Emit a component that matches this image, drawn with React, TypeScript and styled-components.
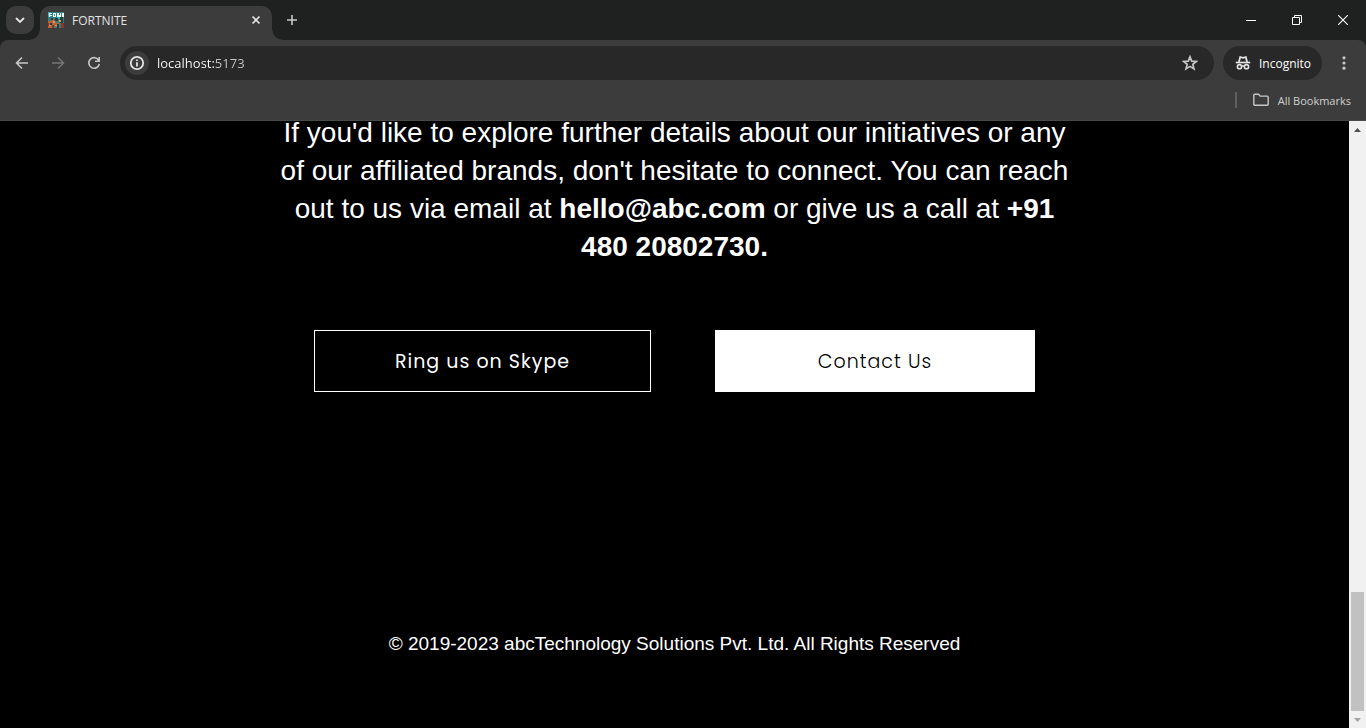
import React from "react";
import styled, { createGlobalStyle } from "styled-components";

const GlobalStyle = createGlobalStyle`
  * { box-sizing: border-box; }
  body { margin: 0; background: #000; overflow: hidden; }
  button, input { font: inherit; color: inherit; border: 0; padding: 0; margin: 0; background: none; }
  svg { display: block; }
`;

const Window = styled.div`
  display: flex;
  flex-direction: column;
  height: 100vh;
  background: #000;
  color: #e3e3e3;
  font-family: "Open Sans", "Noto Sans", sans-serif;
  font-size: 12px;
`;

const TabStrip = styled.div`
  display: flex;
  flex: none;
  height: 40px;
  padding: 6px 0 0 6px;
  background: #1f2120;
`;

const TabSearch = styled.button`
  display: grid;
  place-items: center;
  width: 28px;
  height: 28px;
  border-radius: 10px;
  background: #3c3c3c;
`;

const Tab = styled.div`
  position: relative;
  display: flex;
  align-items: center;
  width: 232px;
  height: 34px;
  margin-left: 6px;
  padding: 0 8px 6px;
  border-radius: 10px 10px 0 0;
  background: #3c3c3c;

  &::before, &::after {
    content: "";
    position: absolute;
    bottom: 0;
    width: 10px;
    height: 10px;
  }
  &::before {
    right: 100%;
    background: radial-gradient(circle at 0 0, transparent 9px, #3c3c3c 10px);
  }
  &::after {
    left: 100%;
    background: radial-gradient(circle at 100% 0, transparent 9px, #3c3c3c 10px);
  }
`;

const TabTitle = styled.span`
  flex: 1;
  margin-left: 8px;
`;

const IconButton = styled.button<{ $w?: number; $h?: number }>`
  display: grid;
  flex: none;
  place-items: center;
  width: ${(p) => p.$w ?? 16}px;
  height: ${(p) => p.$h ?? 16}px;
`;

const NewTab = styled(IconButton)`
  margin: 0 auto 0 6px;
`;

const ToolbarArea = styled.header`
  flex: none;
  background: #1f2120;
`;

const ToolbarSurface = styled.div`
  border-radius: 8px 8px 0 0;
  border-bottom: 1px solid #484a49;
  background: #3c3c3c;
`;

const Toolbar = styled.div`
  display: flex;
  align-items: center;
  height: 46px;
  padding: 0 9px 0 4px;
`;

const AddressBar = styled.form`
  display: flex;
  flex: 1;
  align-items: center;
  height: 34px;
  margin-left: 8px;
  padding: 0 16px 0 5px;
  border-radius: 17px;
  background: #282828;
`;

const SiteInfo = styled(IconButton)`
  border-radius: 50%;
  background: #3c3c3c;
`;

const Address = styled.input`
  flex: 1;
  min-width: 0;
  margin-left: 8px;
  font-size: 13px;
  outline: 0;
  background: linear-gradient(90deg, #fff 58px, #c7c7c7 58px);
  background-clip: text;
  -webkit-text-fill-color: transparent;
`;

const Incognito = styled.button`
  display: flex;
  align-items: center;
  gap: 8px;
  width: 99px;
  height: 34px;
  margin: 0 9px;
  padding: 0 0 0 12px;
  border-radius: 17px;
  background: #282828;
  color: #fff;
`;

const BookmarkBar = styled.div`
  display: flex;
  align-items: center;
  justify-content: flex-end;
  height: 34px;
  padding: 0 15px 6px 0;
`;

const Separator = styled.span`
  width: 2px;
  height: 16px;
  margin-right: 16px;
  background: #5f5f5f;
`;

const AllBookmarks = styled.button`
  display: flex;
  align-items: center;
  gap: 9px;
  color: #d0d0d0;
  font-size: 11px;
`;

const Viewport = styled.div`
  display: flex;
  flex: 1;
  min-height: 0;
`;

const Page = styled.main`
  display: flex;
  flex: 1;
  flex-direction: column;
  align-items: center;
  justify-content: flex-end;
  overflow: hidden;
  padding-bottom: 72px;
  background: #000;
  color: #fff;
  font-family: "Liberation Sans", Arial, sans-serif;
`;

const Message = styled.p`
  max-width: 800px;
  margin: 0;
  font-size: 28px;
  line-height: 38px;
  text-align: center;
`;

const Actions = styled.div`
  display: flex;
  gap: 64px;
  margin-top: 64px;
`;

const Action = styled.button<{ $filled?: boolean }>`
  width: ${(p) => (p.$filled ? 320 : 337)}px;
  height: 62px;
  border: 1px solid #fff;
  background: ${(p) => (p.$filled ? "#fff" : "#000")};
  color: ${(p) => (p.$filled ? "#000" : "#fff")};
  font-family: Poppins, Inter, sans-serif;
  font-size: 19px;
  font-weight: ${(p) => (p.$filled ? 300 : 400)};
  letter-spacing: 1px;
`;

const Copyright = styled.footer`
  margin-top: 240px;
  font-size: 19px;
  line-height: 24px;
`;

const ScrollRail = styled.div`
  display: flex;
  flex: none;
  flex-direction: column;
  width: 17px;
  padding: 0 2px;
  background: #f1f1f1;
`;

const ScrollArrow = styled(IconButton)`
  width: 13px;
  height: 17px;
`;

const ScrollThumb = styled.div`
  height: 119px;
  margin-top: auto;
  background: #c1c1c1;
`;

const Stroke = ({ d, size = 16, color = "#e3e3e3", w = 1.6, children }: {
  d: string; size?: number; color?: string; w?: number; children?: React.ReactNode;
}) => (
  <svg width={size} height={size} viewBox={`0 0 ${size} ${size}`} fill="none" stroke={color} strokeWidth={w} aria-hidden="true">
    <path d={d} />
    {children}
  </svg>
);

const Favicon = () => (
  <svg width="16" height="16" viewBox="0 0 16 16" aria-hidden="true">
    <path fill="#357f80" d="M0 0h16v16H0z" />
    <path fill="#2cb5b6" d="M0 0h3v5H0zM9 5h3v2H9z" />
    <path fill="#e9f5f3" d="M1 1h3v1H2v1h2v1H2v1H1zM5 1h3v4H5zM9 1h2v2h1V1h1v4H9zM14 1h2v4h-2z" />
    <path fill="#4c8d8c" d="M6 2h1v2H6z" />
    <path fill="#b76339" d="M0 9h3V7h3v2h2v2h3v4H7v-2H5v3H0z" />
    <path fill="#2c3b38" d="M3 6h2v2H3zM7 6h3v3H7zM12 5h3v6h-3zM2 11h2v2H2zM9 12h2v4H9z" />
    <path fill="#d69a60" d="M5 9h2v2H5zM11 8h2v2h-2zM1 13h2v1H1zM7 13h2v1H7z" />
    <path fill="#8f3327" d="M0 11h1v3H0zM4 13h2v3H4zM13 11h3v5h-3z" />
  </svg>
);

export default function App() {
  return (
    <Window>
      <GlobalStyle />
      <TabStrip>
        <TabSearch aria-label="Search tabs">
          <Stroke d="M4 6 8 10l4-4" w={1.8} />
        </TabSearch>
        <Tab>
          <Favicon />
          <TabTitle>FORTNITE</TabTitle>
          <IconButton aria-label="Close tab">
            <Stroke d="m4.500 4.500 7 7m0-7-7 7" />
          </IconButton>
        </Tab>
        <NewTab $w={28} $h={28} aria-label="New tab">
          <Stroke d="M8 3v10M3 8h10" color="#c7c7c7" />
        </NewTab>
        <IconButton $w={46} $h={28} aria-label="Minimize">
          <svg width="10" height="10" aria-hidden="true"><path d="M0 5h10v1H0z" fill="#fff" /></svg>
        </IconButton>
        <IconButton $w={46} $h={28} aria-label="Restore">
          <Stroke size={10} w={1} color="#fff" d="M.5 2.500h7v7h-7zM2.500 2.500v-2h7v7h-2" />
        </IconButton>
        <IconButton $w={46} $h={28} aria-label="Close">
          <Stroke size={10} w={1.1} color="#fff" d="m0 0 10 10M10 0 0 10" />
        </IconButton>
      </TabStrip>

      <ToolbarArea>
        <ToolbarSurface>
          <Toolbar>
            <IconButton $w={36} $h={36} aria-label="Back">
              <Stroke d="M14 8H3M8 2.500 2.500 8 8 13.500" color="#c7c7c7" />
            </IconButton>
            <IconButton $w={36} $h={36} aria-label="Forward">
              <Stroke d="M2 8h11M8 2.500 13.500 8 8 13.500" color="#757575" />
            </IconButton>
            <IconButton $w={36} $h={36} aria-label="Reload">
              <Stroke d="M12.800 5.500A5.300 5.300 0 1 0 13.300 9M13.200 2v4.200H9" color="#c7c7c7" />
            </IconButton>
            <AddressBar onSubmit={(e) => e.preventDefault()}>
              <SiteInfo $w={24} $h={24} type="button" aria-label="View site information">
                <Stroke w={1.8} d="M8 7.200v4.300M8 4.500v1.600">
                  <circle cx="8" cy="8" r="6.200" />
                </Stroke>
              </SiteInfo>
              <Address aria-label="Address" defaultValue="localhost:5173" spellCheck={false} />
              <IconButton type="button" aria-label="Bookmark this tab">
                <Stroke w={1.7} color="#c7c7c7" d="m8 1.800 1.700 4.300 4.700.3-3.600 3 1.200 4.500L8 11.400l-4 2.500 1.200-4.500-3.600-3 4.700-.3z" />
              </IconButton>
            </AddressBar>
            <Incognito>
              <svg width="16" height="16" viewBox="0 0 16 16" fill="none" stroke="#e3e3e3" aria-hidden="true">
                <path d="M.8 7.500h14.400" strokeWidth="1.700" />
                <path d="M3.900 7 5.200 2l2.800.8 2.800-.8 1.300 5" strokeWidth="1.800" />
                <circle cx="4.500" cy="11.700" r="2.100" strokeWidth="1.600" />
                <circle cx="11.500" cy="11.700" r="2.100" strokeWidth="1.600" />
                <path d="M6.700 11.200q1.300-.8 2.600 0" strokeWidth="1.500" />
              </svg>
              Incognito
            </Incognito>
            <IconButton $w={26} $h={34} aria-label="Menu">
              <svg width="16" height="16" viewBox="0 0 16 16" fill="#c7c7c7" aria-hidden="true">
                <circle cx="8" cy="2.800" r="1.600" /><circle cx="8" cy="8" r="1.600" /><circle cx="8" cy="13.200" r="1.600" />
              </svg>
            </IconButton>
          </Toolbar>
          <BookmarkBar>
            <Separator />
            <AllBookmarks>
              <svg width="16" height="14" viewBox="0 0 16 14" fill="none" stroke="#c7c7c7" strokeWidth="1.400" aria-hidden="true">
                <path d="M.8 2.300q0-1 1-1h3.800l1.600 1.800h7q1 0 1 1v7.100q0 1-1 1H1.800q-1 0-1-1z" />
              </svg>
              All Bookmarks
            </AllBookmarks>
          </BookmarkBar>
        </ToolbarSurface>
      </ToolbarArea>

      <Viewport>
        <Page>
          <Message>
            If you'd like to explore further details about our initiatives or any of our affiliated
            brands, don't hesitate to connect. You can reach out to us via email at{" "}
            <b>hello@abc.com</b> or give us a call at <b>+91 480 20802730.</b>
          </Message>
          <Actions>
            <Action>Ring us on Skype</Action>
            <Action $filled>Contact Us</Action>
          </Actions>
          <Copyright>© 2019-2023 abcTechnology Solutions Pvt. Ltd. All Rights Reserved</Copyright>
        </Page>
        <ScrollRail>
          <ScrollArrow aria-label="Scroll up">
            <svg width="7" height="4" aria-hidden="true"><path d="M0 4 3.500 0 7 4z" fill="#505050" /></svg>
          </ScrollArrow>
          <ScrollThumb />
          <ScrollArrow aria-label="Scroll down">
            <svg width="7" height="4" aria-hidden="true"><path d="M0 0h7L3.500 4z" fill="#a3a3a3" /></svg>
          </ScrollArrow>
        </ScrollRail>
      </Viewport>
    </Window>
  );
}
